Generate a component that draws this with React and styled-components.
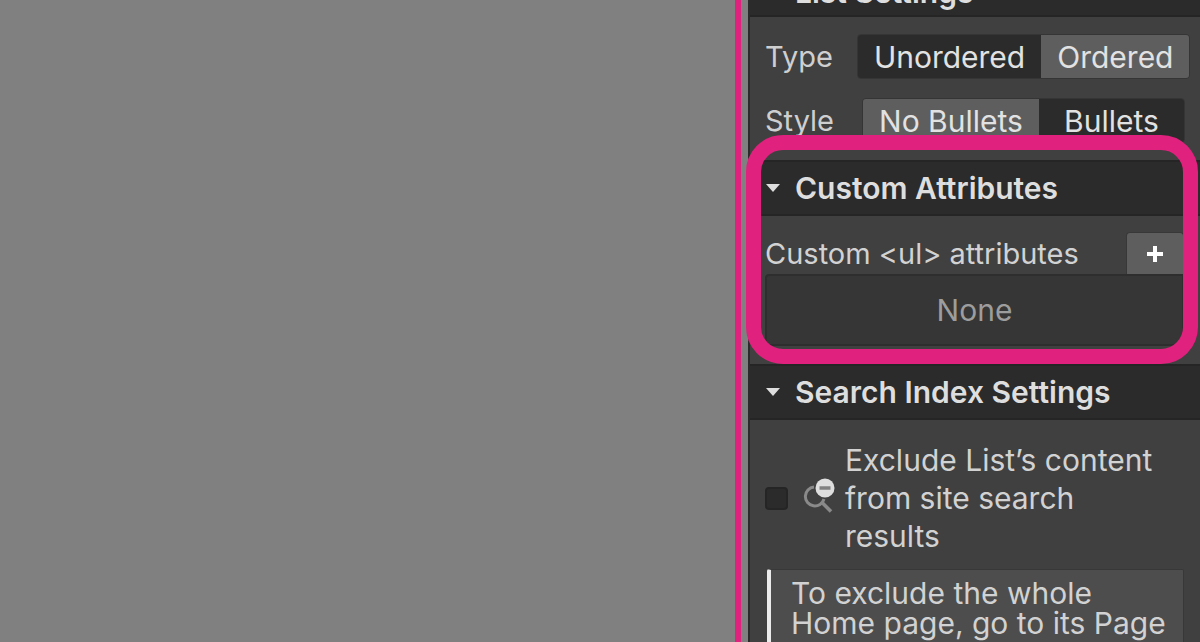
import React, { useState } from "react";
import styled, { createGlobalStyle } from "styled-components";

const SettingsSection = ({ title, compact, children }) => (
  <Section>
    <SectionHeader type="button" aria-expanded="true" $compact={compact}>
      <Caret viewBox="0 0 14 8" aria-hidden="true">
        <path d="M0 0h14L7 8z" fill="currentColor" />
      </Caret>
      {title}
    </SectionHeader>
    {children}
  </Section>
);

const SearchOffIcon = () => (
  <SearchSvg viewBox="0 0 32 40" aria-hidden="true">
    <path d="M11 9A9.500 9.500 0 1 0 21 21" fill="none" stroke="#8a8a8a" strokeWidth="3" />
    <path d="M19 24.500l9 9" fill="none" stroke="#8a8a8a" strokeWidth="3.500" />
    <circle cx="22" cy="10" r="9.500" fill="#dedede" />
    <path d="M16.500 10h11" stroke="#808080" strokeWidth="3.500" />
  </SearchSvg>
);

const App = () => {
  const [type, setType] = useState("unordered");
  const [bullets, setBullets] = useState(true);
  const [excluded, setExcluded] = useState(false);

  return (
    <>
      <GlobalStyle />
      <Workspace>
        <Canvas />
        <Panel>
          <PanelContent>
            <SettingsSection title="List Settings" compact>
              <ListBody>
                <Field $gap="24px" $end="10px">
                  <FieldLabel id="type-label">Type</FieldLabel>
                  <Segmented role="group" aria-labelledby="type-label">
                    <Segment
                      type="button"
                      aria-pressed={type === "unordered"}
                      $active={type === "unordered"}
                      onClick={() => setType("unordered")}
                    >
                      Unordered
                    </Segment>
                    <Segment
                      type="button"
                      aria-pressed={type === "ordered"}
                      $active={type === "ordered"}
                      onClick={() => setType("ordered")}
                    >
                      Ordered
                    </Segment>
                  </Segmented>
                </Field>
                <Field $gap="28px" $end="15px">
                  <FieldLabel id="style-label">Style</FieldLabel>
                  <Segmented role="group" aria-labelledby="style-label">
                    <Segment
                      type="button"
                      aria-pressed={!bullets}
                      $active={!bullets}
                      onClick={() => setBullets(false)}
                    >
                      No Bullets
                    </Segment>
                    <Segment
                      type="button"
                      aria-pressed={bullets}
                      $active={bullets}
                      onClick={() => setBullets(true)}
                    >
                      Bullets
                    </Segment>
                  </Segmented>
                </Field>
              </ListBody>
            </SettingsSection>

            <SettingsSection title="Custom Attributes">
              <AttributesBody>
                <AttributesTop>
                  <span>Custom &lt;ul&gt; attributes</span>
                  <AddButton type="button" aria-label="Add attribute">
                    <svg width="16" height="16" viewBox="0 0 16 16" aria-hidden="true">
                      <path d="M8 0v16M0 8h16" stroke="#fff" strokeWidth="4" />
                    </svg>
                  </AddButton>
                </AttributesTop>
                <EmptyList>None</EmptyList>
              </AttributesBody>
              <Highlight />
            </SettingsSection>

            <SettingsSection title="Search Index Settings">
              <SearchBody>
                <ExcludeLabel>
                  <Checkbox
                    type="checkbox"
                    checked={excluded}
                    onChange={(e) => setExcluded(e.target.checked)}
                  />
                  <SearchOffIcon />
                  <ExcludeText>Exclude List’s content from site search results</ExcludeText>
                </ExcludeLabel>
                <Note>To exclude the whole Home page, go to its Page</Note>
              </SearchBody>
            </SettingsSection>
          </PanelContent>
        </Panel>
      </Workspace>
    </>
  );
};

const GlobalStyle = createGlobalStyle`
  * {
    box-sizing: border-box;
  }

  body {
    margin: 0;
    font-family: Inter, "Liberation Sans", sans-serif;
    font-size: 29px;
    color: #d2d2d2;
    background-color: #808080;
  }

  button {
    font: inherit;
    color: inherit;
    border: none;
    padding: 0;
  }
`;

const Workspace = styled.div`
  display: flex;
  height: 100vh;
  overflow: hidden;
`;

const Canvas = styled.main`
  flex: 1;
  margin-right: 7px;
  background-color: #808080;
  border-right: 6px solid #e0217d;
`;

const Panel = styled.aside`
  width: 452px;
  flex-shrink: 0;
  background-color: #404040;
  border-left: 2px solid #2b2b2b;
`;

// the panel is scrolled a little way down
const PanelContent = styled.div`
  margin-top: -33px;
`;

const Section = styled.section`
  position: relative;
`;

const SectionHeader = styled.button`
  display: flex;
  align-items: center;
  gap: 15px;
  width: 100%;
  height: ${(props) => (props.$compact ? "50px" : "56px")};
  padding: 0 16px;
  font-size: 30px;
  font-weight: 600;
  color: #dedede;
  background-color: #2b2b2b;
  border-top: 2px solid #252525;
  border-bottom: 2px solid #252525;
`;

const Caret = styled.svg`
  width: 14px;
  height: 8px;
`;

const ListBody = styled.div`
  display: flex;
  flex-direction: column;
  gap: 19px;
  padding: 17px 0 17px 15px;
`;

const Field = styled.div`
  display: flex;
  align-items: center;
  gap: ${(props) => props.$gap};
  padding-right: ${(props) => props.$end};
`;

const FieldLabel = styled.span`
  color: #cfcfcf;
`;

const Segmented = styled.div`
  display: flex;
  flex: 1;
  height: 45px;
  border: 1px solid #353535;
  border-radius: 4px;
  overflow: hidden;
`;

const Segment = styled.button`
  flex: 0 0 auto;
  padding: 0 16px;
  font-size: 30px;
  white-space: nowrap;
  color: #e2e2e2;
  background-color: ${(props) => (props.$active ? "#2b2b2b" : "#5e5e5e")};

  &:last-child {
    flex: 1 0 auto;
  }
`;

const AttributesBody = styled.div`
  padding: 16px 16px 18px 15px;
`;

const AttributesTop = styled.div`
  display: flex;
  align-items: center;
  justify-content: space-between;
  height: 42px;
`;

const AddButton = styled.button`
  display: flex;
  align-items: center;
  justify-content: center;
  width: 58px;
  height: 42px;
  background-color: #5e5e5e;
  border: 1px solid #383838;
  border-bottom: none;
  border-radius: 4px 4px 0 0;
`;

const EmptyList = styled.div`
  display: flex;
  align-items: center;
  justify-content: center;
  height: 72px;
  font-size: 30px;
  color: #9d9d9d;
  background-color: #363636;
  border: 2px solid #2e2e2e;
  border-radius: 4px 0 4px 4px;
`;

const Highlight = styled.div`
  position: absolute;
  inset: -25px 2px 0 -4px;
  border: 15px solid #e0217d;
  border-radius: 37px;
  pointer-events: none;
`;

const SearchBody = styled.div`
  padding: 21px 16px 16px 15px;
  font-size: 30px;
`;

const ExcludeLabel = styled.label`
  display: flex;
  align-items: center;
  line-height: 38px;
`;

const ExcludeText = styled.span`
  padding-right: 16px;
`;

const Checkbox = styled.input`
  appearance: none;
  flex-shrink: 0;
  width: 23px;
  height: 23px;
  margin: 0 15px 0 0;
  background-color: #2b2b2b;
  border: 2px solid #252525;
  border-radius: 4px;

  &:checked {
    background-color: #d5d5d5;
  }
`;

const SearchSvg = styled.svg`
  flex-shrink: 0;
  width: 32px;
  height: 40px;
  margin-right: 10px;
`;

const Note = styled.p`
  margin: 14px 0 0 2px;
  padding: 8px 8px 8px 20px;
  line-height: 30px;
  background-color: #4d4d4d;
  border: 1px solid #383838;
  border-left: 4px solid #ebebeb;
  border-radius: 2px;
`;

export default App;
